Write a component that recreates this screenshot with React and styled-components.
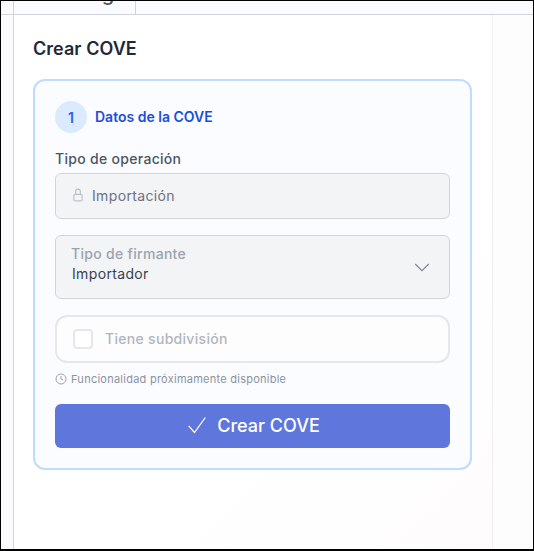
import React from "react";
import styled, { createGlobalStyle } from "styled-components";

const Global = createGlobalStyle`
  html, body { margin: 0; padding: 0; height: 100%; background: #fff; }
  * { box-sizing: border-box; }
  body { font-family: Inter, "Noto Sans", sans-serif; }
`;

const Page = styled.div`
  width: 534px;
  height: 551px;
  border: solid #000;
  border-width: 1px 1px 2px 1px;
  background: #fbfaff;
  display: flex;
  flex-direction: column;
  overflow: hidden;
`;

const TabBar = styled.div`
  height: 14px;
  flex: none;
  border-bottom: 1px solid #d1d5db;
  padding-left: 12px;
  display: flex;
`;

const Tab = styled.div`
  width: 123px;
  height: 13px;
  border: solid #d1d5db;
  border-width: 0 1px 0 1px;
  color: #4b5563;
  font-size: 20px;
  font-weight: 500;
  padding-left: 19px;
  overflow: hidden;
  span { display: block; margin-top: -17px; line-height: 20px; }
`;

const Body = styled.div`
  flex: 1;
  padding-left: 12px;
  display: flex;
`;

const Panel = styled.main`
  width: 480px;
  border-left: 1px solid #d1d5db;
  border-right: 1px solid #f0f0f3;
  background: linear-gradient(135deg, #ffffff 60%, #fefcfd 100%);
  padding: 24px 0 0 19px;
`;

const Rail = styled.div`
  flex: 1;
  background: #fefdfe;
`;

const Title = styled.h1`
  margin: 0 0 20px;
  font-size: 18px;
  line-height: 20px;
  font-weight: 600;
  letter-spacing: 0.05px;
  color: #1f2937;
`;

const Card = styled.section`
  width: 439px;
  height: 391px;
  border: 2px solid #bfdbfe;
  border-radius: 12px;
  background: #fbfcff;
  padding: 20px;
`;

const StepHead = styled.div`
  display: flex;
  align-items: center;
  gap: 8px;
  height: 32px;
  margin-bottom: 16px;
`;

const StepNum = styled.div`
  width: 32px;
  height: 32px;
  border-radius: 50%;
  background: #dbeafe;
  color: #2563eb;
  font-size: 14px;
  font-weight: 600;
  display: flex;
  align-items: center;
  justify-content: center;
`;

const StepTitle = styled.div`
  color: #1d4ed8;
  font-size: 14px;
  font-weight: 600;
  padding-bottom: 2px;
`;

const Label = styled.div`
  color: #4b5563;
  font-size: 14px;
  line-height: 20px;
  font-weight: 500;
  letter-spacing: 0.3px;
  margin-bottom: 4px;
`;

const ReadOnly = styled.div`
  height: 46px;
  border: 1px solid #d1d5db;
  border-radius: 6px;
  background: #f3f4f6;
  display: flex;
  align-items: center;
  gap: 7px;
  padding: 0 0 2px 15px;
  color: #6b7280;
  font-size: 14px;
  letter-spacing: 0.35px;
  margin-bottom: 16px;
`;

const Select = styled.div`
  height: 64px;
  border: 1px solid #d1d5db;
  border-radius: 6px;
  background: #f3f4f6;
  display: flex;
  align-items: center;
  justify-content: space-between;
  padding: 0 18px 0 15px;
  margin-bottom: 16px;
`;

const SelectText = styled.div`
  padding-bottom: 6px;
`;

const SelectLabel = styled.div`
  color: #9ca3af;
  font-size: 14px;
  line-height: 20px;
  font-weight: 500;
  letter-spacing: 0.3px;
`;

const SelectValue = styled.div`
  color: #374151;
  font-size: 14px;
  line-height: 20px;
  letter-spacing: 0.35px;
  padding-left: 1px;
`;

const CheckRow = styled.div`
  height: 48px;
  border: 2px solid #e5e7eb;
  border-radius: 12px;
  background: #fdfdfe;
  display: flex;
  align-items: center;
  gap: 12px;
  padding-left: 16px;
  color: #b0b5bf;
  font-size: 14px;
  font-weight: 500;
  letter-spacing: 0.3px;
`;

const CheckText = styled.span`
  padding-bottom: 2px;
`;

const Box = styled.div`
  width: 20px;
  height: 20px;
  border: 2px solid #e5e7eb;
  border-radius: 4px;
  background: #fff;
`;

const Hint = styled.div`
  display: flex;
  align-items: center;
  gap: 4px;
  color: #8b92a0;
  font-size: 11px;
  line-height: 16px;
  letter-spacing: 0.25px;
  margin: 8px 0 17px;
`;

const Submit = styled.button`
  width: 100%;
  height: 44px;
  border: 0;
  border-radius: 6px;
  background: #5f77dc;
  color: #fff;
  font-family: inherit;
  font-size: 18px;
  font-weight: 500;
  display: flex;
  align-items: center;
  justify-content: center;
  gap: 10px;
  padding: 0 0 2px 2px;
`;

export default function App() {
  return (
    <>
      <Global />
      <Page>
        <TabBar>
          <Tab><span>Valor Ag</span></Tab>
        </TabBar>
        <Body>
          <Panel>
            <Title>Crear COVE</Title>
            <Card>
              <StepHead>
                <StepNum>1</StepNum>
                <StepTitle>Datos de la COVE</StepTitle>
              </StepHead>
              <Label>Tipo de operación</Label>
              <ReadOnly>
                <svg width="14" height="14" viewBox="0 0 24 24" fill="none" stroke="#bcc0c9" strokeWidth="2">
                  <rect x="5" y="11" width="14" height="11" rx="2" />
                  <path d="M8 11V6a4 4 0 0 1 8 0v5" />
                </svg>
                Importación
              </ReadOnly>
              <Select>
                <SelectText>
                  <SelectLabel>Tipo de firmante</SelectLabel>
                  <SelectValue>Importador</SelectValue>
                </SelectText>
                <svg width="18" height="18" viewBox="0 0 24 24" fill="none" stroke="#7d8596" strokeWidth="1.5">
                  <path d="M3 8l9 9 9-9" />
                </svg>
              </Select>
              <CheckRow>
                <Box />
                <CheckText>Tiene subdivisión</CheckText>
              </CheckRow>
              <Hint>
                <svg width="12" height="12" viewBox="0 0 24 24" fill="none" stroke="#9ca3af" strokeWidth="2">
                  <circle cx="12" cy="12" r="10" />
                  <path d="M12 6v6l4 2" />
                </svg>
                Funcionalidad próximamente disponible
              </Hint>
              <Submit>
                <svg width="20" height="20" viewBox="0 0 24 24" fill="none" stroke="#fff" strokeWidth="1.5">
                  <path d="M2 13l7 8L22 3" />
                </svg>
                Crear COVE
              </Submit>
            </Card>
          </Panel>
          <Rail />
        </Body>
      </Page>
    </>
  );
}
